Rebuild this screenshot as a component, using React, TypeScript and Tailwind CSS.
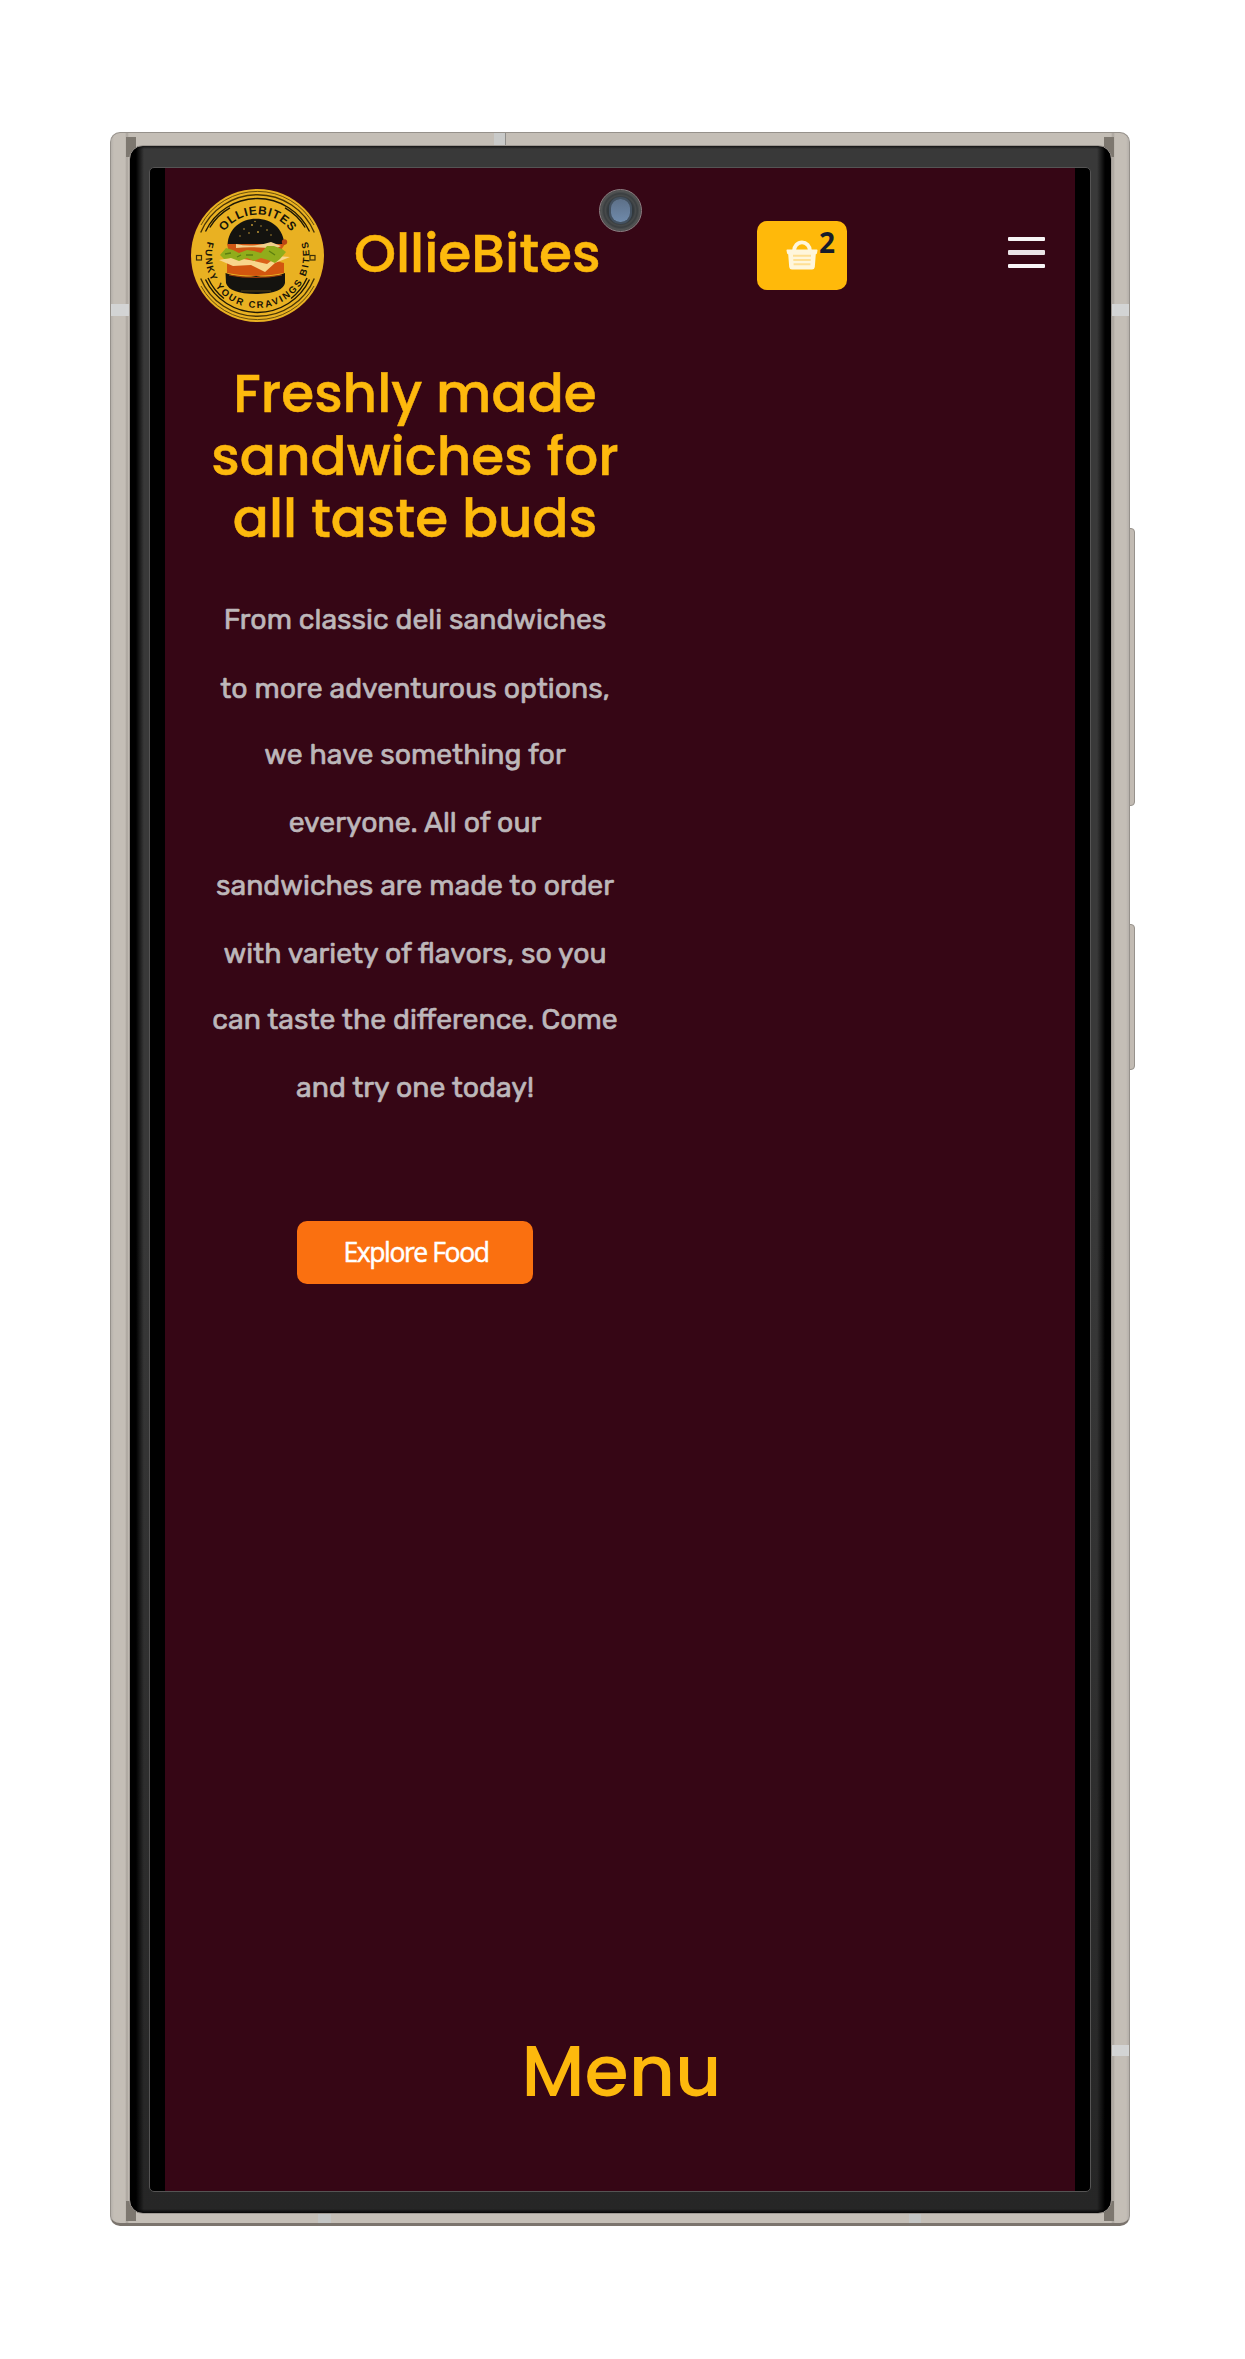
import React from "react";

const STORY: { text: string; box: string }[] = [
  { text: "From classic deli sandwiches", box: "h-[68.5px]" },
  { text: "to more adventurous options,", box: "h-[66px]" },
  { text: "we have something for", box: "h-[68px]" },
  { text: "everyone. All of our", box: "h-[63.5px]" },
  { text: "sandwiches are made to order", box: "h-[68px]" },
  { text: "with variety of flavors, so you", box: "h-[65.5px]" },
  { text: "can taste the difference. Come", box: "h-[68.5px]" },
  { text: "and try one today!", box: "h-[67px]" },
];

function Logo() {
  return (
    <svg viewBox="0 0 133 133" className="h-[133px] w-[133px] shrink-0" aria-label="OllieBites logo">
      <defs>
        <path id="ring-top" d="M 25.5 66.5 A 41 41 0 0 1 107.5 66.5" />
        <path id="ring-bottom" d="M 17.7 49 A 52 52 0 1 0 115.3 49" />
      </defs>
      <circle cx="66.5" cy="66.5" r="66.5" fill="#e9b122" />
      <g fill="none" stroke="#4a3606" strokeWidth="1.4">
        <path d="M 9.7 43.6 A 61.5 61.5 0 0 1 123.3 43.6" />
        <path d="M 9.7 89.4 A 61.5 61.5 0 0 0 123.3 89.4" />
        <path d="M 10 36 A 64.3 64.3 0 0 1 123 36" strokeWidth="1" opacity=".8" />
        <path d="M 10 97 A 64.3 64.3 0 0 0 123 97" strokeWidth="1" opacity=".8" />
        <path d="M 14.5 42.5 A 57.5 57.5 0 0 1 118.5 42.5" stroke="#1d1705" />
        <path d="M 14.5 90.5 A 57.5 57.5 0 0 0 118.5 90.5" stroke="#1d1705" />
        <path d="M 18.8 38.5 A 54.8 54.8 0 0 1 39 18.9 M 94 18.9 A 54.8 54.8 0 0 1 114.2 38.5" stroke="#1d1705" />
        <path d="M 17 89 A 54.5 54.5 0 0 0 33 109.5 M 100 109.5 A 54.5 54.5 0 0 0 116 89" stroke="#1d1705" />
      </g>
      <g fill="none" stroke="#3d3009" strokeWidth="1.2">
        <rect x="5.5" y="66.5" width="5" height="4.5" />
        <rect x="119" y="66.5" width="5" height="4.5" />
      </g>
      <g fill="#171307" fontFamily="'Liberation Sans', sans-serif" fontWeight="700">
        <text fontSize="12" textAnchor="middle" textLength="78">
          <textPath href="#ring-top" startOffset="50%">OLLIEBITES</textPath>
        </text>
        <text fontSize="9.5" textAnchor="middle" textLength="192">
          <textPath href="#ring-bottom" startOffset="50%">FUNKY YOUR CRAVINGS BITES</textPath>
        </text>
      </g>
      <path d="M36.6 55.5 C37 40 50 29.7 65 29.7 C81 29.7 92.5 40 93.3 55.5 Z" fill="#14130f" />
      <g fill="#cda13a">
        <circle cx="53" cy="40" r=".8" /><circle cx="61" cy="36" r=".9" /><circle cx="70" cy="37" r=".7" />
        <circle cx="58" cy="44" r=".8" /><circle cx="67" cy="43" r=".9" /><circle cx="76" cy="41" r=".8" />
        <circle cx="49" cy="47" r=".7" /><circle cx="80" cy="46" r=".7" /><circle cx="64" cy="32.5" r=".7" />
      </g>
      <path d="M36 55 L94 55 L88 64 L38 64 Z" fill="#cf5713" />
      <path d="M45 55 Q62 59 80 53 L90 57 L84 60 Q62 57 45 59 Z" fill="#f0cf8b" />
      <circle cx="93.5" cy="53" r="2.7" fill="#b94513" />
      <path d="M36 74 Q65 66 93 74 L93 84 Q65 90 36 84 Z" fill="#d2560f" />
      <path d="M28 71 L50 67 L86 67 L99 68 L84 74 L74 83 L60 76 L42 77 Z" fill="#f8d68b" />
      <path d="M46 69 L84 69 L76 75 Q61 71 46 69 Z" fill="#db6119" />
      <path d="M29 66 L35 59 L42 61 L48 64 L56 61 L63 62 L70 64 L76 57 L83 57 L91 60 L95 63 L89 70 L84 74 L77 71 L70 69 L63 72 L56 69 L48 72 L40 69 L33 70 Z" fill="#91ad1b" />
      <path d="M34 65 L40 64 M55 66 L62 66 M78 62 L84 66 M46 68 L50 66" stroke="#5d7f10" strokeWidth="1.3" />
      <path d="M34.5 84 Q50 90 65 87 Q80 90 94 84 L94 94 Q92 104 67 105 Q38 105 35 94 Z" fill="#14130f" />
      <path d="M38 86 Q65 91 91 86" stroke="#9a3d0d" strokeWidth="1.2" fill="none" />
      <path d="M50 102 H80" stroke="#6c551a" strokeWidth=".7" />
    </svg>
  );
}

function Basket() {
  return (
    <svg viewBox="0 0 32 30" className="h-[30px] w-8" fill="none">
      <path d="M8 11 A8 8.6 0 0 1 24 11" stroke="#fff6dc" strokeWidth="3.8" />
      <path d="M1.2 9.5 H30.8 Q31.6 9.5 31.5 10.6 L31 13 Q30.8 14.2 29.8 14.2 L28.8 27 Q28.5 29.5 26 29.5 H6 Q3.5 29.5 3.2 27 L2.2 14.2 Q1.2 14.2 1 13 L.5 10.6 Q.4 9.5 1.2 9.5 Z" fill="#fff6dc" />
      <path d="M7 15.7 H25 M7.3 20 H24.7 M7.6 24.3 H24.4" stroke="#ffdf94" strokeWidth="1.9" />
    </svg>
  );
}

function MenuIcon() {
  return (
    <div className="flex w-[37px] flex-col gap-[9px]">
      <span className="h-[4.6px] rounded-[1px] bg-[#f8f4f6]" />
      <span className="h-[4.6px] rounded-[1px] bg-[#eae3e6]" />
      <span className="h-[4.6px] rounded-[1px] bg-[#f8f4f6]" />
    </div>
  );
}

function Header() {
  return (
    <header className="flex h-[174px] items-center pl-[26px] pr-[30px]">
      <Logo />
      <h1 className="-mt-[2px] ml-[30px] w-[403px] text-[53.5px] leading-[64px] font-medium text-[#fdb90d] [-webkit-text-stroke:0.5px_#fdb90d]">
        OllieBites
      </h1>
      <button className="relative flex h-[69px] w-[90px] items-center justify-center rounded-[10px] bg-[#ffb90a]">
        <Basket />
        <span className="absolute top-[5px] right-[12px] font-['Noto_Sans',sans-serif] text-[28px] leading-[32px] font-bold text-[#171c2b]">
          2
        </span>
      </button>
      <button className="-mt-[5px] ml-auto">
        <MenuIcon />
      </button>
    </header>
  );
}

function Hero() {
  return (
    <section className="flex w-[500px] flex-col items-center pt-[21px] text-center">
      <h2 className="text-[53.3px] leading-[62.7px] font-medium text-[#fdb90d] [-webkit-text-stroke:0.5px_#fdb90d]">
        Freshly made
        <br />
        sandwiches for
        <br />
        all taste buds
      </h2>
      <p className="mt-[35px] font-['Rubik','Roboto',sans-serif] text-[28.4px] leading-[67px] whitespace-nowrap text-[#bdb7ba] [-webkit-text-stroke:0.65px_#bdb7ba]">
        {STORY.map((line) => (
          <span key={line.text} className={"block " + line.box}>
            {line.text}
          </span>
        ))}
      </p>
      <button className="mt-[99.5px] h-[63px] w-[236px] rounded-[10px] bg-[#fa7010] pl-[2px] font-['Open_Sans',sans-serif] text-[26.5px] leading-none tracking-[-1.4px] text-white [-webkit-text-stroke:0.5px_white]">
        Explore Food
      </button>
    </section>
  );
}

function Frame({ children }: { children: React.ReactNode }) {
  return (
    <div className="relative ml-[110px] h-[2094px] w-[1020px]">
      {/* volume and power keys */}
      <div className="absolute top-[396px] left-[1014px] h-[278px] w-[10.5px] rounded-r-[4px] border border-[#97928c] bg-[#c2bbb3]" />
      <div className="absolute top-[792px] left-[1014px] h-[146px] w-[10.5px] rounded-r-[4px] border border-[#97928c] bg-[#c2bbb3]" />
      <div className="relative h-full rounded-[10px] border border-[#96918b] border-b-[3px] border-b-[#7b746d] bg-[linear-gradient(to_right,#b5b0aa_0,#c4beb6_3px,#c4beb6_14px,#aaa49d_16px,#c4beb6_18px,#c4beb6_calc(100%-18px),#aaa49d_calc(100%-16px),#c4beb6_calc(100%-14px),#c4beb6_calc(100%-3px),#b5b0aa_100%)] pt-[12px] pl-[18px]">
        {/* antenna bands */}
        <div className="absolute top-0 left-[383px] h-[13px] w-[12px] border-r border-[#8f8d8a] bg-[#c9cac9]" />
        <div className="absolute top-[171px] left-0 h-[12px] w-[18px] bg-[#d3d4d4]" />
        <div className="absolute top-[171px] right-0 h-[12px] w-[18px] bg-[#d3d4d4]" />
        <div className="absolute top-[1912px] right-0 h-[11px] w-[18px] bg-[#d3d4d4]" />
        <div className="absolute bottom-0 left-[207px] h-[11px] w-[13px] bg-[#c3c5c4]" />
        <div className="absolute bottom-0 left-[798px] h-[11px] w-[12px] bg-[#c3c5c4]" />
        {/* corner shadows */}
        <div className="absolute top-[4px] left-[15px] h-5 w-[10px] bg-[#7d776f]" />
        <div className="absolute top-[4px] right-[15px] h-5 w-[10px] bg-[#7d776f]" />
        <div className="absolute bottom-[2px] left-[15px] h-5 w-[10px] bg-[#7d776f]" />
        <div className="absolute right-[15px] bottom-[2px] h-5 w-[10px] bg-[#7d776f]" />
        <div className="relative h-[2069px] w-[983px] rounded-[14px] border border-[#a09a94] bg-[linear-gradient(to_right,#000_0,#000_6px,transparent_14px,transparent_calc(100%-14px),#000_calc(100%-6px),#000_100%),linear-gradient(to_bottom,#161616_0,#393939_3px,#393939_50%,#262626_calc(100%-4px),#050505_100%)] pt-[21px] pl-[19px]">
          <div className="h-[2025px] w-[942px] overflow-hidden rounded-[5px] border border-[#555454] bg-black pl-[15px]">
            {children}
          </div>
        </div>
      </div>
    </div>
  );
}

export default function App() {
  return (
    <div className="h-[2359px] w-[1245px] overflow-hidden bg-white pt-[132px]">
      <Frame>
        <main className="relative flex h-full w-[910px] flex-col bg-[#360615] font-['Poppins','Inter',sans-serif]">
          <Header />
          <Hero />
          <h2 className="mt-auto mb-[84px] pl-[3px] text-center text-[71.5px] leading-[72px] font-medium text-[#fdb90d]">
            Menu
          </h2>
          {/* front camera */}
          <div className="absolute top-[21px] left-[433.5px] flex h-[43px] w-[43px] items-center justify-center rounded-full border-[1.5px] border-[#8c7f83] bg-[radial-gradient(circle,#33393d_0,#33393d_45%,#474a4b_52%,#3a3e40_58%,#525454_66%,#4a4c4c_70%)]">
            <div className="h-[23px] w-[19px] rounded-[9px] bg-[linear-gradient(to_bottom,#5d7088,#6f8aab)] ring-2 ring-[#435160]" />
          </div>
        </main>
      </Frame>
    </div>
  );
}
